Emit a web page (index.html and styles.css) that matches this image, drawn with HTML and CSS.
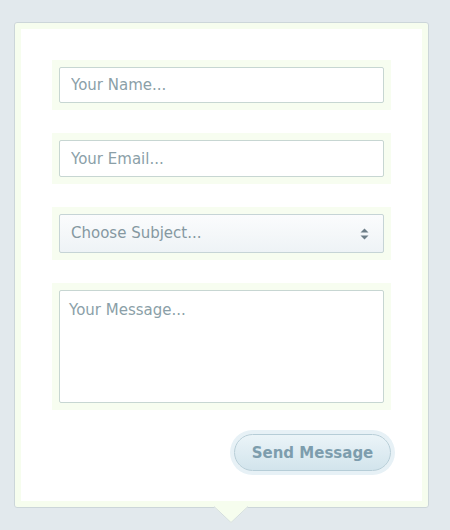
FILE: index.html
```html
<!DOCTYPE html>
<html>
<head>
<meta charset="utf-8">
<link rel="stylesheet" href="styles.css">
</head>
<body>
<form class="card">
  <div class="field"><input class="input input-name" type="text" placeholder="Your Name..."></div>
  <div class="field"><input class="input input-email" type="text" placeholder="Your Email..."></div>
  <div class="field">
    <div class="select">
      <span class="select-label">Choose Subject...</span>
      <svg class="select-arrow" width="9" height="12" viewBox="0 0 9 12"><path d="M4.5 0.5 L8.5 4.5 L0.5 4.5 Z M0.5 7.5 L8.5 7.5 L4.5 11.5 Z" fill="#6d7e87"/></svg>
    </div>
  </div>
  <div class="field"><textarea class="input textarea" placeholder="Your Message..."></textarea></div>
  <div class="actions"><button class="btn" type="button">Send Message</button></div>
  <svg class="pointer" width="36" height="18" viewBox="0 0 36 18"><path d="M0 0 L36 0 L36 1 L35 1 L18 17 L1 1 L0 1 Z" fill="#f6fdee"/><path d="M1 0.5 L18 16.5 L35 0.5" fill="none" stroke="#d3dcdf" stroke-width="1"/></svg>
</form>
</body>
</html>
```
FILE: styles.css
```css
* { box-sizing: border-box; }
html, body { margin: 0; padding: 0; }
body {
  background: #e2e9ed;
  font-family: "DejaVu Sans", Verdana, sans-serif;
  padding: 22px 0 0 14px;
  height: 530px;
  overflow: hidden;
}
.card {
  position: relative;
  width: 415px;
  background: #fff;
  border: 1px solid #ccd6d9;
  border-radius: 3px;
  box-shadow: inset 0 0 0 6px #f6fdee;
  padding: 37px 37px 36px 37px;
  margin: 0;
}
.field {
  padding: 7px;
  background: #f7fdf0;
  margin: 0 0 23px 0;
  width: 339px;
}
.field:nth-child(4) { margin-bottom: 0; }
.input {
  display: block;
  width: 100%;
  border: 1px solid #c7d6d2;
  border-radius: 2px;
  background: #fff;
  font-family: "DejaVu Sans", Verdana, sans-serif;
  font-size: 15px;
  color: #7f949e;
  padding: 0 11px;
  outline: none;
  margin: 0;
}
.input::placeholder { color: #8b9fa8; opacity: 1; }
.input-name { height: 36px; }
.input-email { height: 37px; }
.textarea {
  height: 113px;
  padding: 9px 9px;
  resize: none;
  line-height: 20px;
}
.select {
  display: flex;
  align-items: center;
  justify-content: space-between;
  height: 39px;
  border: 1px solid #c6d4d6;
  border-radius: 2px;
  background: linear-gradient(#fbfcfd, #eef3f6);
  padding: 0 14px 0 11px;
  font-size: 15px;
  color: #8598a1;
}
.select-label { line-height: 1; }
.select-arrow { display: block; }
.actions {
  display: flex;
  justify-content: flex-end;
  padding-top: 24px;
  width: 339px;
}
.btn {
  height: 37px;
  width: 157px;
  border: 1px solid #b6cdd7;
  border-radius: 19px;
  background: linear-gradient(#ebf4f8, #d2e4ec);
  box-shadow: 0 0 0 4px #e7f1f6;
  font-family: "DejaVu Sans", Verdana, sans-serif;
  font-weight: bold;
  font-size: 15px;
  color: #7d9dad;
  padding: 0;
  cursor: pointer;
}
.pointer {
  position: absolute;
  left: 198px;
  bottom: -17px;
  display: block;
}
```
